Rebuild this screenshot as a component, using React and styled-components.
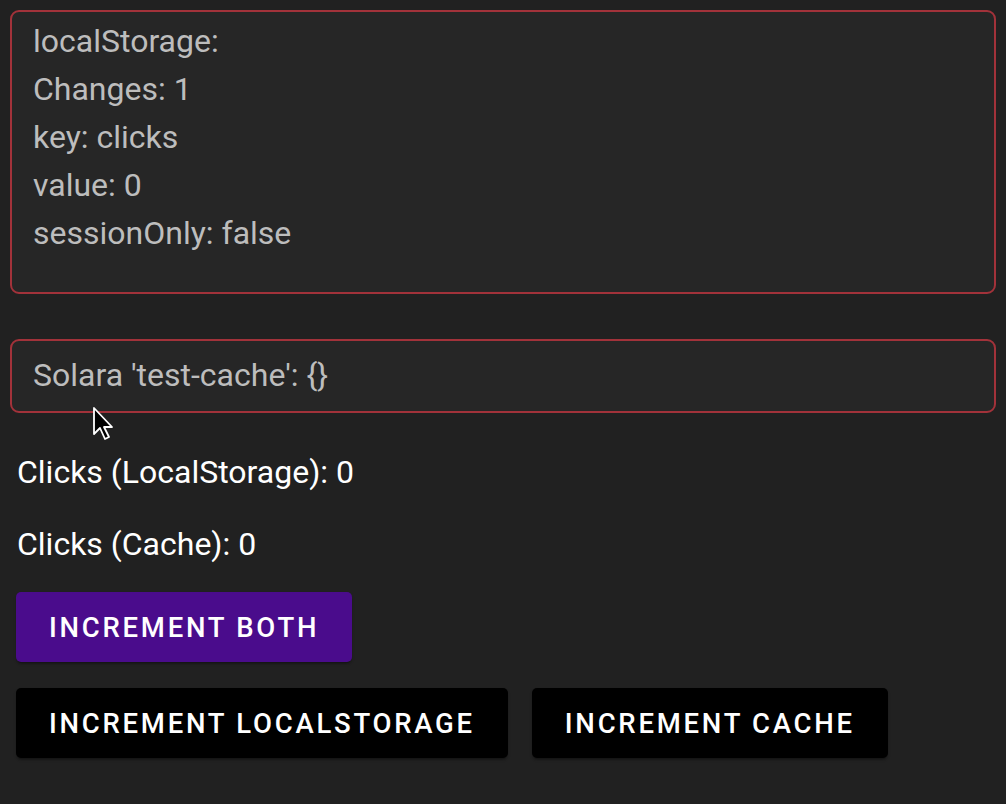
import React from "react"
import styled, { createGlobalStyle } from "styled-components"

const GlobalStyle = createGlobalStyle`
  html, body {
    margin: 0;
    padding: 0;
    background-color: #212121;
    font-family: Roboto, "Liberation Sans", sans-serif;
  }
`

const Page = styled.div`
  position: relative;
  box-sizing: border-box;
  width: 1006px;
  min-height: 804px;
  padding: 10px 10px 0 10px;
  background-color: #212121;
  color: #fff;
  display: flex;
  flex-direction: column;
`

const Panel = styled.div`
  box-sizing: border-box;
  border: 2px solid #a2323a;
  border-radius: 9px;
  background-color: #262626;
  padding: ${(p) => p.$pad};
  margin-bottom: ${(p) => p.$gap || "0px"};
  color: #bdbdbd;
  font-size: 32px;
  line-height: 48px;
`

const Line = styled.div`
  white-space: pre;
`

const Label = styled.div`
  font-size: 32px;
  line-height: 48px;
  padding-left: 7px;
  color: #fff;
  margin-bottom: 24px;
`

const Column = styled.div`
  display: flex;
  flex-direction: column;
  padding-left: 6px;
  gap: 26px;
`

const Row = styled.div`
  display: flex;
  gap: 24px;
`

const Button = styled.button`
  box-sizing: border-box;
  height: 70px;
  padding: 0 33px;
  border: none;
  border-radius: 5px;
  background-color: ${(p) => (p.$primary ? "#4a0c8c" : "#000")};
  color: #fff;
  font-family: Roboto, "Liberation Sans", sans-serif;
  font-size: 27.5px;
  font-weight: 500;
  letter-spacing: 2.75px;
  text-transform: uppercase;
  box-shadow: 0 3px 2px -2px rgba(0, 0, 0, 0.3), 0 2px 3px rgba(0, 0, 0, 0.2);
  cursor: pointer;
  align-self: flex-start;
`

const Cursor = styled.svg`
  position: absolute;
  left: 92px;
  top: 407px;
  pointer-events: none;
`

export default function App() {
  return (
    <React.Fragment>
      <GlobalStyle />
      <Page>
        <Panel $pad="5px 21px 35px" $gap="45px">
          <Line>localStorage:</Line>
          <Line>Changes: 1</Line>
          <Line>key: clicks</Line>
          <Line>value: 0</Line>
          <Line>sessionOnly: false</Line>
        </Panel>
        <Panel $pad="10px 21px 12px" $gap="35px">
          <Line>Solara 'test-cache': {"{}"}</Line>
        </Panel>
        <Label>Clicks (LocalStorage): 0</Label>
        <Label>Clicks (Cache): 0</Label>
        <Column>
          <Button $primary>Increment both</Button>
          <Row>
            <Button>Increment localStorage</Button>
            <Button>Increment cache</Button>
          </Row>
        </Column>
        <Cursor width="24" height="36" viewBox="0 0 24 36">
          <path
            d="M2 1 L2 27 L8 21 L13 32 L17 30 L12 20 L20 20 Z"
            fill="#000"
            stroke="#fff"
            strokeWidth="1.8"
            strokeLinejoin="round"
          />
        </Cursor>
      </Page>
    </React.Fragment>
  )
}
